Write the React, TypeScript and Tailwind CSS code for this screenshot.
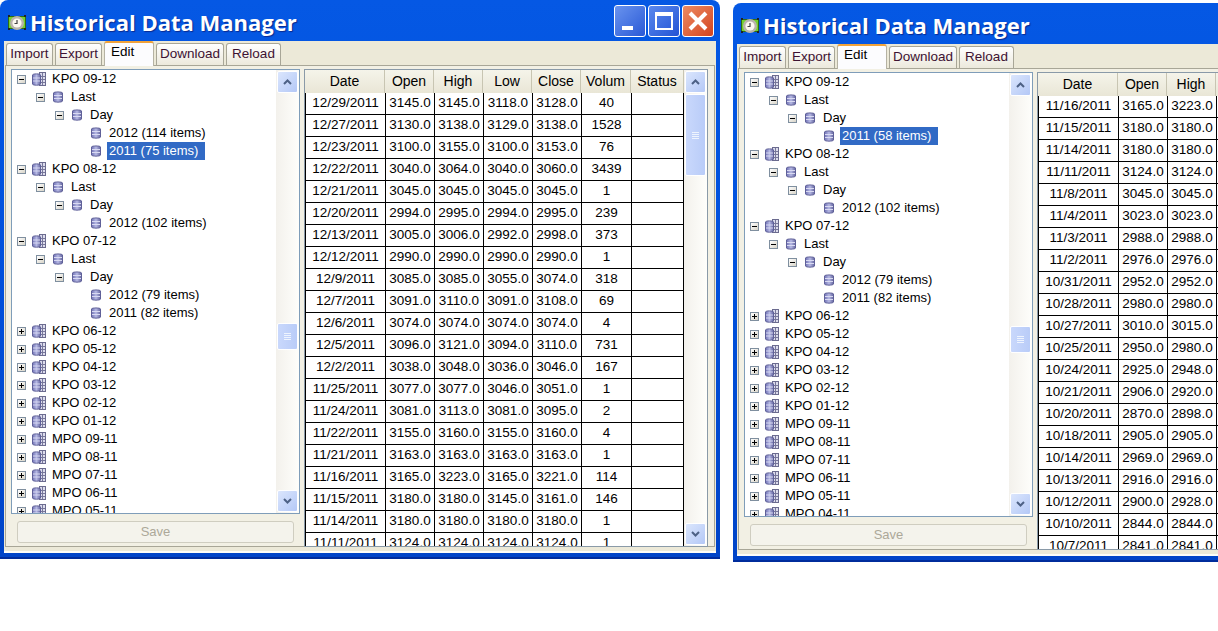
import { useId } from 'react';

type TreeRow = { level: number; label: string; kind: 'group' | 'db'; toggle?: '+' | '-'; selected?: boolean };
type Row = string[];

const font = { ui: "font-['Liberation_Sans',Arial,sans-serif]" };

const group = (label: string, toggle: '+' | '-' = '+'): TreeRow => ({ level: 0, label, kind: 'group', toggle });
const sub = (level: number, label: string): TreeRow => ({ level, label, kind: 'db', toggle: '-' });
const leaf = (label: string, selected = false): TreeRow => ({ level: 3, label, kind: 'db', selected });

const closedFrom = (names: string[]) => names.map(n => group(n));

const leftTree: TreeRow[] = [
  group('KPO 09-12', '-'), sub(1, 'Last'), sub(2, 'Day'), leaf('2012 (114 items)'), leaf('2011 (75 items)', true),
  group('KPO 08-12', '-'), sub(1, 'Last'), sub(2, 'Day'), leaf('2012 (102 items)'),
  group('KPO 07-12', '-'), sub(1, 'Last'), sub(2, 'Day'), leaf('2012 (79 items)'), leaf('2011 (82 items)'),
  ...closedFrom(['KPO 06-12', 'KPO 05-12', 'KPO 04-12', 'KPO 03-12', 'KPO 02-12', 'KPO 01-12', 'MPO 09-11', 'MPO 08-11', 'MPO 07-11', 'MPO 06-11', 'MPO 05-11']),
];

const rightTree: TreeRow[] = [
  group('KPO 09-12', '-'), sub(1, 'Last'), sub(2, 'Day'), leaf('2011 (58 items)', true),
  group('KPO 08-12', '-'), sub(1, 'Last'), sub(2, 'Day'), leaf('2012 (102 items)'),
  group('KPO 07-12', '-'), sub(1, 'Last'), sub(2, 'Day'), leaf('2012 (79 items)'), leaf('2011 (82 items)'),
  ...closedFrom(['KPO 06-12', 'KPO 05-12', 'KPO 04-12', 'KPO 03-12', 'KPO 02-12', 'KPO 01-12', 'MPO 09-11', 'MPO 08-11', 'MPO 07-11', 'MPO 06-11', 'MPO 05-11', 'MPO 04-11']),
];

const leftRows: Row[] = [
  ['12/29/2011', '3145.0', '3145.0', '3118.0', '3128.0', '40'],
  ['12/27/2011', '3130.0', '3138.0', '3129.0', '3138.0', '1528'],
  ['12/23/2011', '3100.0', '3155.0', '3100.0', '3153.0', '76'],
  ['12/22/2011', '3040.0', '3064.0', '3040.0', '3060.0', '3439'],
  ['12/21/2011', '3045.0', '3045.0', '3045.0', '3045.0', '1'],
  ['12/20/2011', '2994.0', '2995.0', '2994.0', '2995.0', '239'],
  ['12/13/2011', '3005.0', '3006.0', '2992.0', '2998.0', '373'],
  ['12/12/2011', '2990.0', '2990.0', '2990.0', '2990.0', '1'],
  ['12/9/2011', '3085.0', '3085.0', '3055.0', '3074.0', '318'],
  ['12/7/2011', '3091.0', '3110.0', '3091.0', '3108.0', '69'],
  ['12/6/2011', '3074.0', '3074.0', '3074.0', '3074.0', '4'],
  ['12/5/2011', '3096.0', '3121.0', '3094.0', '3110.0', '731'],
  ['12/2/2011', '3038.0', '3048.0', '3036.0', '3046.0', '167'],
  ['11/25/2011', '3077.0', '3077.0', '3046.0', '3051.0', '1'],
  ['11/24/2011', '3081.0', '3113.0', '3081.0', '3095.0', '2'],
  ['11/22/2011', '3155.0', '3160.0', '3155.0', '3160.0', '4'],
  ['11/21/2011', '3163.0', '3163.0', '3163.0', '3163.0', '1'],
  ['11/16/2011', '3165.0', '3223.0', '3165.0', '3221.0', '114'],
  ['11/15/2011', '3180.0', '3180.0', '3145.0', '3161.0', '146'],
  ['11/14/2011', '3180.0', '3180.0', '3180.0', '3180.0', '1'],
  ['11/11/2011', '3124.0', '3124.0', '3124.0', '3124.0', '1'],
];

const rightRows: Row[] = [
  ['11/16/2011', '3165.0', '3223.0'],
  ['11/15/2011', '3180.0', '3180.0'],
  ['11/14/2011', '3180.0', '3180.0'],
  ['11/11/2011', '3124.0', '3124.0'],
  ['11/8/2011', '3045.0', '3045.0'],
  ['11/4/2011', '3023.0', '3023.0'],
  ['11/3/2011', '2988.0', '2988.0'],
  ['11/2/2011', '2976.0', '2976.0'],
  ['10/31/2011', '2952.0', '2952.0'],
  ['10/28/2011', '2980.0', '2980.0'],
  ['10/27/2011', '3010.0', '3015.0'],
  ['10/25/2011', '2950.0', '2980.0'],
  ['10/24/2011', '2925.0', '2948.0'],
  ['10/21/2011', '2906.0', '2920.0'],
  ['10/20/2011', '2870.0', '2898.0'],
  ['10/18/2011', '2905.0', '2905.0'],
  ['10/14/2011', '2969.0', '2969.0'],
  ['10/13/2011', '2916.0', '2916.0'],
  ['10/12/2011', '2900.0', '2928.0'],
  ['10/10/2011', '2844.0', '2844.0'],
  ['10/7/2011', '2841.0', '2841.0'],
];

const headers = ['Date', 'Open', 'High', 'Low', 'Close', 'Volum', 'Status'];
const colClass = ['w-[80px]', 'w-[49px]', 'w-[49px]', 'w-[49px]', 'w-[49px]', 'w-[50px]', 'w-[53px]'];

function AppIcon() {
  return (
    <svg width="18" height="18" viewBox="0 0 18 18" className="shrink-0 mt-[4px] ml-[2px]">
      <rect x="0.5" y="2.5" width="17" height="12" fill="#74d02e" stroke="#2e6b12" />
      <rect x="0" y="1" width="2" height="2" fill="#222" />
      <rect x="16" y="1" width="2" height="2" fill="#222" />
      <rect x="0" y="14" width="2" height="2" fill="#222" />
      <rect x="16" y="14" width="2" height="2" fill="#222" />
      <circle cx="9" cy="9" r="7" fill="#b9b4ac" />
      <circle cx="9" cy="9" r="4.6" fill="#fbf8f0" />
      <path d="M9 6v3.5H6.5" fill="none" stroke="#444" strokeWidth="1.2" />
    </svg>
  );
}

function Toggle({ sign }: { sign: '+' | '-' }) {
  return (
    <span className="relative w-[9px] h-[9px] shrink-0 border border-[#7f8f9f] bg-gradient-to-br from-white to-[#d8d4c8]">
      <span className="absolute left-[1px] top-[3px] w-[5px] h-[1px] bg-black" />
      {sign === '+' && <span className="absolute left-[3px] top-[1px] w-[1px] h-[5px] bg-black" />}
    </span>
  );
}

function DbIcon({ wide }: { wide: boolean }) {
  const id = useId();
  return (
    <svg width={wide ? 14 : 10} height={wide ? 14 : 12} viewBox={wide ? '0 0 14 14' : '0 0 10 12'} className="shrink-0">
      <defs>
        <linearGradient id={id} x1="0" x2="1" y1="0" y2="0">
          <stop offset="0" stopColor="#6f70b4" />
          <stop offset="0.5" stopColor="#b6b9e4" />
          <stop offset="1" stopColor="#64659f" />
        </linearGradient>
      </defs>
      {wide && (
        <>
          <rect x="7.5" y="0.5" width="6" height="13" fill="#dcdcec" stroke="#6b6b8f" />
          <path d="M9 4.5h4M9 7.5h4M9 10.5h4M10.5 1v12" stroke="#77779a" />
        </>
      )}
      <path
        d={wide ? 'M0.5 3C0.5 1.5 8.5 1.5 8.5 3V12C8.5 13.6 0.5 13.6 0.5 12Z' : 'M0.5 2C0.5 0.6 9.5 0.6 9.5 2V10C9.5 11.5 0.5 11.5 0.5 10Z'}
        fill={`url(#${id})`}
        stroke="#5f6098"
      />
      <path d={wide ? 'M1 6h7M1 9h7' : 'M1 4.5h8M1 7.5h8'} stroke="#d9daf2" />
    </svg>
  );
}

function TreeLine({ row }: { row: TreeRow }) {
  const pad = ['pl-[5px]', 'pl-[24px]', 'pl-[43px]', 'pl-[62px]'][row.level];
  return (
    <div className={`flex items-center h-[18px] shrink-0 ${pad}`}>
      <span className="w-[15px] shrink-0 flex items-center">{row.toggle ? <Toggle sign={row.toggle} /> : null}</span>
      <span className={row.kind === 'group' ? 'w-[17px] shrink-0 flex' : 'w-[17px] shrink-0 pl-[2px] flex'}>
        <DbIcon wide={row.kind === 'group'} />
      </span>
      <span className={row.selected ? 'bg-[#316ac5] text-white pl-[2px] pr-[7px] leading-[18px] ml-[1px]' : 'text-black px-[2px] leading-[18px] ml-[1px]'}>{row.label}</span>
    </div>
  );
}

function ScrollButton({ dir }: { dir: 'up' | 'down' }) {
  return (
    <div className="h-[22px] w-[21px] shrink-0 rounded-[2px] border border-white bg-gradient-to-br from-[#dbe6fd] to-[#b4c8f6] flex items-center justify-center">
      <svg width="9" height="6" viewBox="0 0 9 6">
        <path d={dir === 'up' ? 'M1 5l3.5-3.5L8 5' : 'M1 1l3.5 3.5L8 1'} fill="none" stroke="#4d6185" strokeWidth="2" />
      </svg>
    </div>
  );
}

function ScrollBar({ thumbClass, spacer }: { thumbClass: string; spacer: string }) {
  return (
    <div className="w-[23px] shrink-0 h-full flex flex-col items-center py-[1px] bg-gradient-to-r from-[#f3f1ec] to-[#fefefb]">
      <ScrollButton dir="up" />
      <div className={`${spacer} shrink-0`} />
      <div className={`${thumbClass} w-[21px] shrink-0 rounded-[2px] border border-white bg-gradient-to-r from-[#c9d8fc] to-[#b9ccf8] flex flex-col items-center justify-center gap-[1px]`}>
        <span className="w-[7px] h-[1px] bg-[#eef4fe]" />
        <span className="w-[7px] h-[1px] bg-[#eef4fe]" />
        <span className="w-[7px] h-[1px] bg-[#eef4fe]" />
        <span className="w-[7px] h-[1px] bg-[#eef4fe]" />
      </div>
      <div className="flex-1" />
      <ScrollButton dir="down" />
    </div>
  );
}

function Tab({ label, active, width }: { label: string; active?: boolean; width: string }) {
  if (active) {
    return (
      <div className={`${width} h-[25px] -mb-[1px] z-10 bg-[#fcfcfe] border-x border-[#b5b2a3] border-t-2 border-t-[#f0a23a] rounded-t-[3px] text-black text-[13.5px] pb-[5px] pl-[6px] flex items-center`}>
        {label}
      </div>
    );
  }
  return (
    <div className={`${width} h-[22px] bg-gradient-to-b from-white to-[#ece9dc] border border-b-0 border-[#a8a697] rounded-t-[3px] text-[#3d1232] text-[13.5px] flex items-center justify-center`}>
      {label}
    </div>
  );
}

function WindowFrame({ tree, rows, treeThumbSpacer, dataThumb, showControls }: {
  tree: TreeRow[]; rows: Row[]; treeThumbSpacer: string; dataThumb: { size: string; spacer: string }; showControls: boolean;
}) {
  return (
    <div className={`${font.ui} w-[720px] h-[559px] shrink-0 rounded-t-[8px] bg-gradient-to-b from-[#0558e4] via-[#0050dc] to-[#0044c8] flex flex-col px-[4px] pb-[4px] border-b-2 border-b-[#002c9c]`}>
      <div className="h-[41px] shrink-0 flex items-center pl-[2px] pr-[2px] gap-[4px]">
        <AppIcon />
        <span className="text-white font-['Open_Sans',sans-serif] font-bold text-[22px] leading-none mt-[3px] [text-shadow:1px_1px_1px_#0a2a90] flex-1 whitespace-nowrap">Historical Data Manager</span>
        {showControls && (
          <div className="flex gap-[2px] items-center">
            <div className="w-[32px] h-[32px] rounded-[3px] border border-white bg-gradient-to-br from-[#6a93ee] to-[#2a58d6] flex items-end pl-[7px] pb-[6px]">
              <span className="w-[11px] h-[4px] bg-white" />
            </div>
            <div className="w-[32px] h-[32px] rounded-[3px] border border-white bg-gradient-to-br from-[#5a88ee] to-[#2453d4] flex items-center justify-center">
              <span className="w-[18px] h-[18px] border-2 border-t-[4px] border-white" />
            </div>
            <div className="w-[32px] h-[32px] rounded-[3px] border border-white bg-gradient-to-br from-[#ec8a62] to-[#d3421c] flex items-center justify-center">
              <svg width="20" height="20" viewBox="0 0 20 20">
                <path d="M2 2l16 16M18 2L2 18" stroke="white" strokeWidth="4" />
              </svg>
            </div>
          </div>
        )}
      </div>

      <div className="flex-1 min-h-0 bg-[#ece9d8] flex flex-col px-[1px] pb-[4px] border-b-2 border-b-[#fdfdf8]">
        <div className="flex items-end gap-[2px] pl-[1px] h-[24px] shrink-0">
          <Tab label="Import" width="w-[47px]" />
          <Tab label="Export" width="w-[47px]" />
          <Tab label="Edit" active width="w-[50px]" />
          <Tab label="Download" width="w-[68px]" />
          <Tab label="Reload" width="w-[55px]" />
        </div>

        <div className="flex-1 min-h-0 border border-[#a8a697] bg-[#f2f0e4] flex gap-[4px] pl-[5px] pr-[7px] pt-[3px] pb-[4px]">
          <div className="w-[289px] shrink-0 flex flex-col">
            <div className="h-[445px] shrink-0 flex border border-[#7f9db9] bg-white overflow-hidden text-[13px]">
              <div className="flex-1 min-w-0 flex flex-col overflow-hidden">
                {tree.map((r, i) => <TreeLine key={i} row={r} />)}
              </div>
              <ScrollBar thumbClass="h-[27px]" spacer={treeThumbSpacer} />
            </div>
            <div className="mt-[7px] ml-[6px] w-[277px] h-[22px] border border-[#cfcdc0] rounded-[3px] bg-[#f4f3ec] text-[#aca899] text-[13px] flex items-center justify-center">
              Save
            </div>
          </div>

          <div className="w-[404px] h-[478px] shrink-0 border border-[#8a9aa8] bg-white flex overflow-hidden text-[13px] text-black">
            <div className="flex-1 min-w-0 flex flex-col overflow-hidden">
              <div className="h-[23px] shrink-0 flex bg-gradient-to-b from-[#f5f4ea] to-[#e9e6d6]">
                {headers.map((h, i) => (
                  <div key={h} className={`${colClass[i]} shrink-0 flex items-center justify-center border-r border-[#c8c5b2] text-[14px]`}>{h}</div>
                ))}
              </div>
              {rows.map((r, ri) => (
                <div key={ri} className="h-[22px] shrink-0 flex border-b border-black">
                  {colClass.map((c, i) => (
                    <div key={i} className={`${c} shrink-0 flex items-center justify-center border-l border-black text-[13.5px] ${i === 6 ? 'border-r' : ''}`}>{r[i] ?? ''}</div>
                  ))}
                </div>
              ))}
            </div>
            <ScrollBar thumbClass={dataThumb.size} spacer={dataThumb.spacer} />
          </div>
        </div>
      </div>
    </div>
  );
}

export default function App() {
  return (
    <div className="w-[1218px] h-[631px] bg-white overflow-hidden flex items-start gap-[13px]">
      <WindowFrame tree={leftTree} rows={leftRows} treeThumbSpacer="h-[230px]" dataThumb={{ size: 'h-[82px]', spacer: 'h-[1px]' }} showControls />
      <div className="pt-[3px] shrink-0">
        <WindowFrame tree={rightTree} rows={rightRows} treeThumbSpacer="h-[230px]" dataThumb={{ size: 'h-[82px]', spacer: 'h-[10px]' }} showControls={false} />
      </div>
    </div>
  );
}
